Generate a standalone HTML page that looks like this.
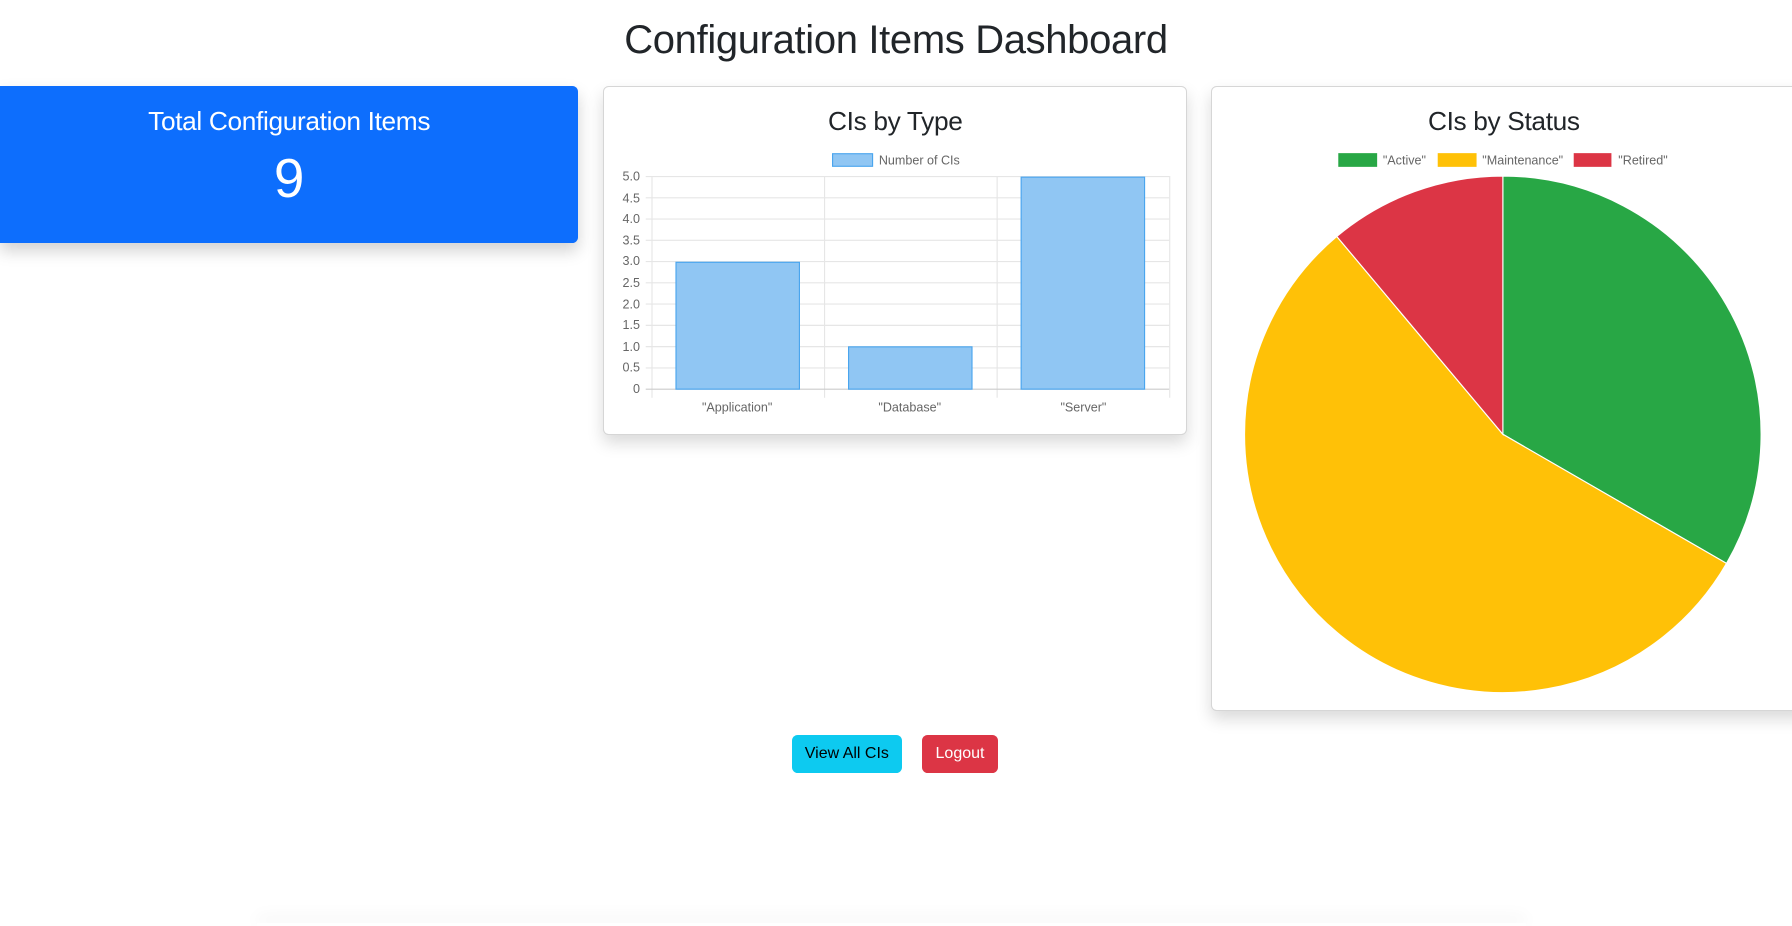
<!DOCTYPE html>
<html><head><meta charset="utf-8"><style>
html,body{margin:0;padding:0;background:#fff;overflow:hidden}
body{width:1568px;height:810px;zoom:1.142857;position:relative;font-family:"Liberation Sans",Arial,sans-serif;color:#212529}
.abs{position:absolute}
h1{position:absolute;left:0;width:1568px;top:12px;margin:0;text-align:center;font-size:35px;font-weight:500;line-height:46px;letter-spacing:-0.3px}
.blue{left:0;top:75px;width:506px;height:138px;background:#0d6efd;border-radius:0 5px 5px 0;box-shadow:0 7px 14px rgba(0,0,0,.18);color:#fff;text-align:center}
.card{background:#fff;border:1px solid #d6d6d6;border-radius:5px;box-shadow:0 7px 14px rgba(0,0,0,.15)}
.ttl{font-size:23px;font-weight:500;text-align:center;line-height:30px;letter-spacing:-0.3px}
.btn{top:643px;height:33px;line-height:33px;border-radius:5px;font-size:14px;text-align:center}
</style></head><body>
<h1>Configuration Items Dashboard</h1>
<div class="abs blue">
 <div class="ttl" style="margin-top:16px">Total Configuration Items</div>
 <div style="font-size:48px;font-weight:300;line-height:56px;margin-top:7px">9</div>
</div>
<div class="abs card" style="left:528px;top:75px;width:509px;height:304px">
 <div class="ttl" style="margin-top:15px">CIs by Type</div>
</div>
<div class="abs card" style="left:1060px;top:75px;width:520px;height:545px">
 <div class="ttl" style="margin-top:15px;width:510px">CIs by Status</div>
</div>
<svg class="abs" style="left:0;top:0" width="1568" height="810" font-family="Liberation Sans, Arial, sans-serif" font-size="11" fill="#666">
 <rect x="728.5" y="134.5" width="35" height="11" fill="#90c6f3" stroke="#4aa5ee"/>
 <text x="769" y="144">Number of CIs</text>
 <g stroke="#e6e6e6" stroke-width="1">
  <line x1="565" y1="154.5" x2="1023" y2="154.5"/><line x1="565" y1="173.1" x2="1023" y2="173.1"/>
  <line x1="565" y1="191.7" x2="1023" y2="191.7"/><line x1="565" y1="210.3" x2="1023" y2="210.3"/>
  <line x1="565" y1="228.9" x2="1023" y2="228.9"/><line x1="565" y1="247.5" x2="1023" y2="247.5"/>
  <line x1="565" y1="266.1" x2="1023" y2="266.1"/><line x1="565" y1="284.7" x2="1023" y2="284.7"/>
  <line x1="565" y1="303.3" x2="1023" y2="303.3"/><line x1="565" y1="321.9" x2="1023" y2="321.9"/>
  <line x1="570.5" y1="154" x2="570.5" y2="348"/><line x1="721.5" y1="154" x2="721.5" y2="348"/>
  <line x1="872.5" y1="154" x2="872.5" y2="348"/><line x1="1023.5" y1="154" x2="1023.5" y2="348"/>
 </g>
 <line x1="565" y1="340.5" x2="1023" y2="340.5" stroke="#ccc"/>
 <g fill="#90c6f3" stroke="#4aa5ee">
  <rect x="591.5" y="229.5" width="108" height="111"/>
  <rect x="742.5" y="303.5" width="108" height="37"/>
  <rect x="893.5" y="155" width="108" height="185.5"/>
 </g>
 <g text-anchor="end">
  <text x="560" y="158">5.0</text><text x="560" y="177">4.5</text><text x="560" y="195">4.0</text>
  <text x="560" y="214">3.5</text><text x="560" y="232">3.0</text><text x="560" y="251">2.5</text>
  <text x="560" y="270">2.0</text><text x="560" y="288">1.5</text><text x="560" y="307">1.0</text>
  <text x="560" y="325">0.5</text><text x="560" y="344">0</text>
 </g>
 <g text-anchor="middle">
  <text x="645" y="360">"Application"</text><text x="796" y="360">"Database"</text><text x="948" y="360">"Server"</text>
 </g>
 <rect x="1171" y="134" width="34" height="12" fill="#28a745"/><text x="1210" y="144">"Active"</text>
 <rect x="1258" y="134" width="34" height="12" fill="#ffc107"/><text x="1297" y="144">"Maintenance"</text>
 <rect x="1377" y="134" width="33" height="12" fill="#dc3545"/><text x="1416" y="144">"Retired"</text>
 <g stroke="#fff" stroke-width="1">
  <path d="M1315 380 L1315 154 A226 226 0 0 1 1510.7 493 Z" fill="#28a745"/>
  <path d="M1315 380 L1510.7 493 A226 226 0 1 1 1169.7 206.9 Z" fill="#ffc107"/>
  <path d="M1315 380 L1169.7 206.9 A226 226 0 0 1 1315 154 Z" fill="#dc3545"/>
 </g>
</svg>
<div class="abs btn" style="left:693px;width:96px;background:#0dcaf0;color:#000">View All CIs</div>
<div class="abs btn" style="left:807px;width:66px;background:#dc3545;color:#fff">Logout</div>
<div class="abs" style="left:225px;top:808px;width:1110px;height:2px;background:#fff;box-shadow:0 -4px 14px rgba(0,0,0,.12)"></div>
</body></html>
